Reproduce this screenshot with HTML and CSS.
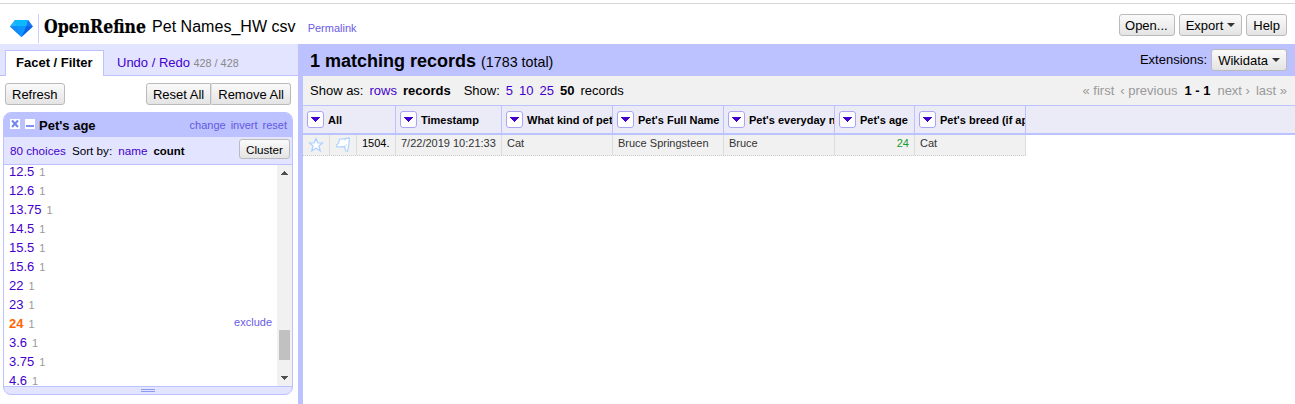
FILE: index.html
```html
<!DOCTYPE html>
<html lang="en">
<head>
<meta charset="utf-8">
<title>Pet Names_HW csv - OpenRefine</title>
<link rel="stylesheet" href="styles.css">
</head>
<body>
<svg width="0" height="0" class="defs">
  <symbol id="down" viewBox="0 0 9 5"><path d="M0 0h9v1h-1v1h-1v1h-1v1h-1v1h-1v-1h-1v-1h-1v-1h-1v-1h-1z" fill="currentColor"/></symbol>
</svg>
<header class="header">
  <svg class="logo" width="150" height="40" viewBox="0 4 150 40">
    <path d="M10 26.500L15 20H28L32.800 26.500L21.500 37Z" fill="#0b96ff"/>
    <path d="M10 26.500L15 20L16.500 26Z" fill="#25b4ff"/>
    <path d="M15 20H28L26.500 26H16.500Z" fill="#0cb8ff"/>
    <path d="M28 20L32.800 26.500L26.500 26Z" fill="#1a72f5"/>
    <path d="M10 26.500L16.500 26L21.500 37Z" fill="#1488f5"/>
    <path d="M26.500 26L32.800 26.500L21.500 37Z" fill="#0a5fe8"/>
    <path d="M38.500 14V43" stroke="#ccccff"/>
    <text class="wordmark" x="44" y="33" textLength="102" lengthAdjust="spacingAndGlyphs">OpenRefine</text>
  </svg>
  <span class="project">Pet Names_HW csv</span>
  <a class="permalink">Permalink</a>
  <div class="actions">
    <span class="button">Open...</span>
    <span class="button">Export<svg class="caret" width="8" height="4"><path d="M0 0h8L4 4z"/></svg></span>
    <span class="button">Help</span>
  </div>
</header>
<div class="body">
  <aside class="left">
    <nav class="tabs">
      <span class="tab active">Facet / Filter</span>
      <span class="tab">Undo / Redo <small>428 / 428</small></span>
    </nav>
    <div class="toolbar">
      <span class="button">Refresh</span>
      <div class="group"><span class="button">Reset All</span><span class="button">Remove All</span></div>
    </div>
    <section class="facet">
      <div class="facet-title">
        <svg width="10" height="10"><path fill="#fff" d="M0 0h10v10H0z"/><path d="M2 1.500l6 6.500M8 1.500L2 8" stroke="#7385ee" stroke-width="2"/></svg>
        <svg width="10" height="10"><path fill="#fff" d="M0 0h10v10H0z"/><path d="M1 6h8v2H1z" fill="#8090ee"/></svg>
        <b>Pet's age</b>
        <span class="facet-links"><a>change</a><a>invert</a><a>reset</a></span>
      </div>
      <div class="facet-controls">
        <a>80 choices</a><span class="sort">Sort by:</span><a class="name">name</a><b>count</b>
        <span class="button small">Cluster</span>
      </div>
      <div class="facet-body">
        <ul class="choices">
          <li>12.5<i>1</i></li>
          <li>12.6<i>1</i></li>
          <li>13.75<i>1</i></li>
          <li>14.5<i>1</i></li>
          <li>15.5<i>1</i></li>
          <li>15.6<i>1</i></li>
          <li>22<i>1</i></li>
          <li>23<i>1</i></li>
          <li class="selected"><b>24</b><i>1</i><a>exclude</a></li>
          <li>3.6<i>1</i></li>
          <li>3.75<i>1</i></li>
          <li>4.6<i>1</i></li>
        </ul>
        <div class="scrollbar">
          <svg width="15" height="15"><path d="M4 10h7v-1h-1v-1h-1v-1h-1v-1h-1v1h-1v1h-1v1h-1z" fill="#505050"/></svg>
          <div class="thumb"></div>
          <svg width="15" height="15"><path d="M4 5h7v1h-1v1h-1v1h-1v1h-1v-1h-1v-1h-1v-1h-1z" fill="#505050"/></svg>
        </div>
      </div>
      <div class="resizer"><span></span></div>
    </section>
  </aside>
  <main class="right">
    <div class="summary">
      <h1>1 matching records</h1><span class="total">(1783 total)</span>
      <span class="ext">Extensions:</span>
      <span class="button">Wikidata<svg class="caret" width="8" height="4"><path d="M0 0h8L4 4z"/></svg></span>
    </div>
    <div class="view">
      <span>Show as:</span><a>rows</a><b>records</b>
      <span class="show">Show:</span><a>5</a><a>10</a><a>25</a><b>50</b><span>records</span>
      <span class="pager"><span>« first</span><span>‹ previous</span><b>1 - 1</b><span>next ›</span><span>last »</span></span>
    </div>
    <div class="grid head">
      <div class="col all"><span class="menu"><svg width="9" height="5"><use href="#down"/></svg></span>All</div>
      <div class="col"><span class="menu"><svg width="9" height="5"><use href="#down"/></svg></span>Timestamp</div>
      <div class="col"><span class="menu"><svg width="9" height="5"><use href="#down"/></svg></span>What kind of pet</div>
      <div class="col"><span class="menu"><svg width="9" height="5"><use href="#down"/></svg></span>Pet's Full Name</div>
      <div class="col"><span class="menu"><svg width="9" height="5"><use href="#down"/></svg></span>Pet's everyday name</div>
      <div class="col"><span class="menu"><svg width="9" height="5"><use href="#down"/></svg></span>Pet's age</div>
      <div class="col"><span class="menu"><svg width="9" height="5"><use href="#down"/></svg></span>Pet's breed (if applicable)</div>
    </div>
    <div class="grid row">
      <div class="cell icon"><svg width="16" height="16" viewBox="0 0 16 16"><path d="M8 1.500L9.800 6H14.500L10.900 9L12.300 14L8 11.200L3.700 14L5.100 9L1.500 6H6.200Z" fill="#fff" stroke="#acd0ff" stroke-width="1.200"/></svg></div>
      <div class="cell icon"><svg width="16" height="16" viewBox="0 0 16 16"><path d="M4.300 2.200L10 1.600L14.300 .9L13.800 8.200L12.600 14.300L10.500 13.800L9.700 9.600L1.700 10L1.500 8.400L3.800 5.800Z" fill="#fff" stroke="#acd0ff" stroke-width="1.100" stroke-linejoin="round"/><path d="M11 1.800L9.500 3.500M9.700 9.600L11.500 7.500" stroke="#acd0ff"/></svg></div>
      <div class="cell index">1504.</div>
      <div class="cell">7/22/2019 10:21:33</div>
      <div class="cell">Cat</div>
      <div class="cell">Bruce Springsteen</div>
      <div class="cell">Bruce</div>
      <div class="cell number">24</div>
      <div class="cell">Cat</div>
    </div>
  </main>
</div>
</body>
</html>
```
FILE: styles.css
```css
* { box-sizing: border-box; }
body { margin: 0; padding-top: 3px; height: 404px; overflow: hidden; background: #fff; color: #000; font: 13px "Liberation Sans", Arial, sans-serif; white-space: nowrap; }
svg { display: block; flex: none; }
.defs { display: none; }
a { color: #4400cc; }

.header { display: flex; height: 41px; border-top: 1px solid #d6d6d6; padding-right: 8px; }
.logo { overflow: visible; }
.wordmark { font: bold 18.500px "DejaVu Serif", serif; stroke: #000; stroke-width: .2px; }
.project { font-size: 16px; line-height: 20px; margin: 13px 0 0 2px; transform-origin: left; letter-spacing: .03px; }
.permalink { font-size: 11px; line-height: 14px; margin: 17px 0 0 12px; color: #6a5be6; }
.actions { display: flex; gap: 4px; margin: 10px 0 0 auto; }
.actions .button:first-child { padding: 0 6px 0 5px; }

.button { display: flex; align-items: center; height: 22px; padding: 0 6px; border: 1px solid #bbb; border-radius: 3px; background: linear-gradient(#fafafa, #e4e4e4); }
.button.small { height: 20px; font-size: 11.700px; }
.caret { margin-left: 4px; fill: #333; }

.body { display: flex; height: 360px; }
.left { width: 298px; }
.tabs { display: flex; height: 32px; padding: 6px 0 0 5px; background: #e3e4ff; border-bottom: 1px solid #bcc2ff; }
.tab { height: 26px; line-height: 24px; padding: 0 10px; border: 1px solid transparent; border-bottom: 0; color: #4400cc; margin-right: 2px; }
.tab.active { background: #fff; border-color: #bcc2ff; color: #000; font-weight: bold; width: 99px; }
.tab small { font-size: 10.800px; color: #888; }
.toolbar { display: flex; justify-content: space-between; padding: 7px 7px 7px 5px; }
.group { display: flex; }
.group .button:first-child { border-radius: 3px 0 0 3px; }
.group .button:last-child { border-left-color: #ddd; border-radius: 0 3px 3px 0; }

.facet { width: 290px; height: 283px; margin-left: 3px; border: 1px solid #bcc2ff; border-radius: 8px; overflow: hidden; background: #e3e4ff; }
.facet-title { display: flex; height: 24px; padding: 6px 5px 0 6px; gap: 5px; background: #bcc2ff; }
.facet-title b { line-height: 14px; margin-left: -1px; }
.facet-links { display: flex; gap: 5px; margin-left: auto; font-size: 11px; line-height: 12px; }
.facet-links a { color: #6258e0; }
.facet-controls { display: flex; height: 28px; padding: 2px 2px 0 6px; font-size: 11.700px; line-height: 24px; border-bottom: 1px solid #bcc2ff; }
.facet-controls .sort { margin: 0 6px; }
.facet-controls .name { margin-right: 6px; }
.facet-controls b { font-size: 11.400px; }
.facet-controls .button { margin-left: auto; line-height: normal; }
.facet-body { display: flex; height: 221px; background: #fff; overflow: hidden; }
.choices { flex: 1; list-style: none; margin: -3px 0 0; padding: 0 5px; }
.choices li { display: flex; height: 19px; line-height: 19px; color: #4400cc; }
.choices i { font-style: normal; font-size: 11px; line-height: 20px; color: #999; margin-left: 5px; }
.choices b { color: #f60; }
.choices a { margin-left: auto; font-size: 11px; line-height: 17px; color: #6a5be6; }
.scrollbar { display: flex; flex-direction: column; width: 15px; background: #f1f1f1; }
.thumb { height: 30px; width: 11px; margin: 150px 0 auto 2px; background: #c1c1c1; }
.resizer { display: flex; justify-content: center; padding-top: 2px; height: 8px; border-top: 1px solid #bcc2ff; }
.resizer span { width: 14px; height: 3px; border: solid #8c9bf0; border-width: 1px 0; }

.right { flex: 1; border-left: 5px solid #bcc2ff; }
.summary { display: flex; height: 32px; padding: 5px 8px 0 7px; background: #bcc2ff; }
.summary h1 { font-size: 18px; line-height: 24px; margin: 0; }
.summary .total { font-size: 14.300px; line-height: 26px; margin-left: 5px; }
.summary .ext { margin: 0 4px 0 auto; line-height: 21px; }
.view { display: flex; gap: 6px; height: 29px; padding: 0 8px 0 7px; line-height: 29px; background: #f1f1f1; }
.view .show { margin-left: 7px; }
.pager { display: flex; gap: 6px; margin-left: auto; color: #999; }
.pager b { color: #000; margin: 0 1px; }

.grid { display: grid; font-size: 11px; }
.head { grid-template-columns: 93px 106px repeat(3, 111px) 80px 111px; height: 30px; background: #ebebf8; border-top: 1px solid #bcc2ff; border-bottom: 2px solid #bcc2ff; font-weight: bold; }
.col { display: flex; align-items: center; gap: 4px; padding-left: 4px; border-right: 1px solid #bcc2ff; overflow: hidden; }
.menu { display: flex; align-items: center; justify-content: center; flex: none; width: 17px; height: 17px; border: 1px solid #aaa4f4; border-radius: 3px; background: #fff; color: #4400cc; }
.row { grid-template-columns: 27px 27px 39px 106px repeat(3, 111px) 80px 111px; width: 723px; height: 21px; background: #f1f1f1; border-bottom: 1px dotted #ccc; color: #333; }
.cell { padding: 0 5px; line-height: 17px; border-right: 1px solid #ddd; }
.cell.icon { padding: 2px 5px; }
.cell.index { color: #000; }
.cell.number { color: #1a9a2e; text-align: right; }
```
